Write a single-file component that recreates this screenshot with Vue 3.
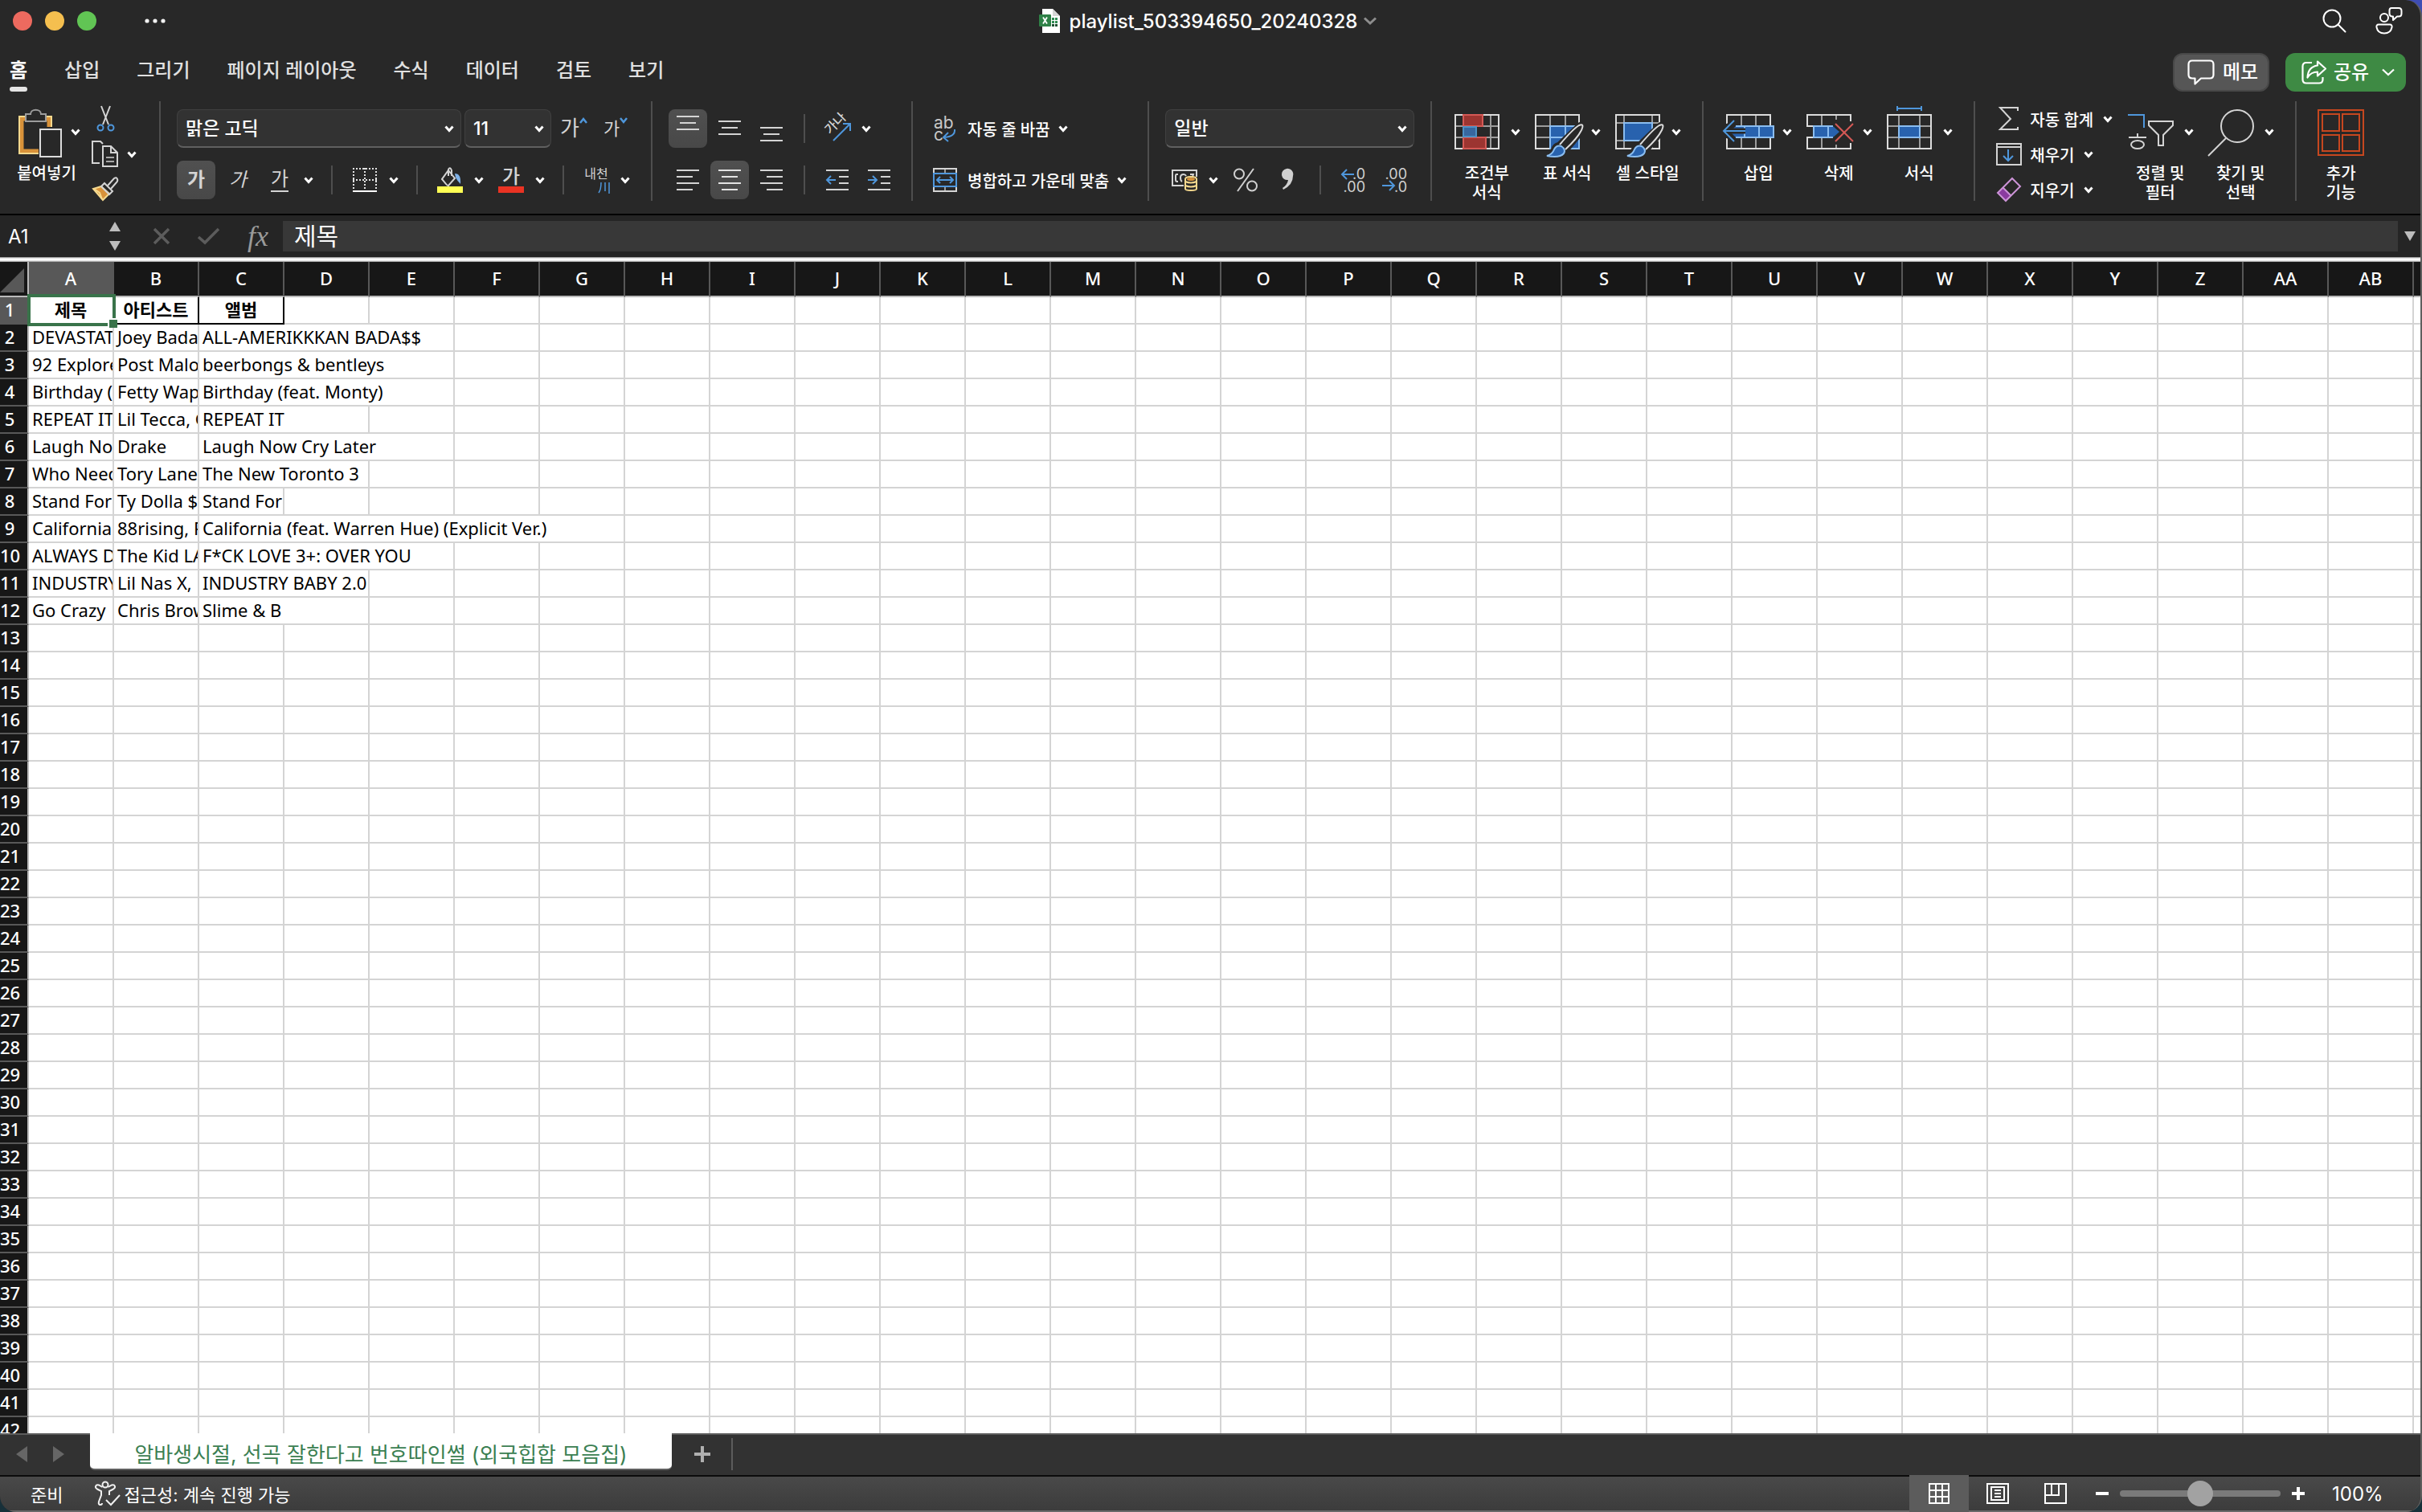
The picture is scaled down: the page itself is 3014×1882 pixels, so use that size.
<script setup>
import { h, ref } from 'vue'

const shapes = {
  chevron: [12, 8, '<path d="M1.5 1.5 6 6.5 10.5 1.5" stroke="#fff" stroke-width="3"/>'],
  thinChevron: [16, 10, '<path d="M1 1.5 8 8 15 1.5" stroke="#fff" stroke-width="2.2"/>'],
  titleChevron: [16, 10, '<path d="M1 1.5 8 8 15 1.5" stroke="#8d8d8d" stroke-width="3"/>'],
  dots: [24, 6, '<g fill="#f2f2f2" stroke="none"><circle cx="3" cy="3" r="2.6"/><circle cx="13" cy="3" r="2.6"/><circle cx="23" cy="3" r="2.6"/></g>'],
  workbook: [26, 30, '<path d="M4 0H17L26 9V30H4Z" fill="#fff" stroke="none"/><path d="M17 0V9H26Z" fill="#d5d5d5" stroke="none"/><g fill="#2f8a52" stroke="none"><path d="M16 11h3v3h-3zM20 11h3v3h-3zM16 15h3v3h-3zM20 15h3v3h-3z"/><path d="M16 19h3v3h-3zM20 19h3v3h-3z" fill="#1d4f31"/></g><rect x="0" y="7" width="15" height="15" rx="1" fill="#2f8147" stroke="none"/><path d="M5 10.5 10 18.5M10 10.5 5 18.5" stroke="#fff" stroke-width="1.8"/>'],
  search: [30, 30, '<circle cx="12" cy="12" r="10.5" stroke="#fff"/><path d="M19.500 19.500 28.500 28.500" stroke="#fff" stroke-linecap="round"/>'],
  person: [34, 34, '<g stroke="#fff"><circle cx="11" cy="13" r="5"/><path d="M4 21.500H18C20 21.500 21 23 20.500 25C19.500 30 16 32.500 11 32.500S2.500 30 1.500 25C1 23 2 21.500 4 21.500Z"/><path d="M20 1H29Q32.500 1 32.500 4.500V8Q32.500 11.500 29 11.500H27L22 16V11.500H20.500Q17.500 11 17.500 8V4Q17.500 1 20 1Z" stroke-linejoin="round"/></g>'],
  memo: [34, 32, '<path d="M6 1.500H28Q32.500 1.500 32.500 6V19Q32.500 23.500 28 23.500H17L9.500 30.500V23.500H6Q1.500 23.500 1.500 19V6Q1.500 1.500 6 1.500Z" stroke="#fff" stroke-width="2.200" stroke-linejoin="round"/>'],
  share: [32, 30, '<g stroke="#fff" stroke-width="2.200" stroke-linejoin="round"><path d="M13 3H6Q1.500 3 1.500 7.500V24Q1.500 28.500 6 28.500H22Q26.500 28.500 26.500 24V21"/><path d="M20 1.500 30 10.500 20 19.500V14.500C14 14.500 10.500 16.500 7.500 21.500C8 12 12.500 7.500 20 6.500Z"/></g>'],
  paste: [56, 60, '<path d="M11 12H5V52H26M34 12H39V22" stroke="#d8923a" stroke-width="5"/><path d="M10 9H2V55H26M34 9H42V22" stroke="#f5d98e"/><path d="M10 6H16C16-1 29-1 29 6H35V15H10Z" fill="#282828" stroke="#9c9c9c"/><rect x="28" y="25" width="26" height="34" fill="#282828" stroke="#dcdcdc"/>'],
  cut: [34, 32, '<path d="M12 0 21 23M23 0 14 23" stroke="#d4d4d4"/><g stroke="#4f97dc"><circle cx="11" cy="27" r="3.500"/><circle cx="24" cy="27" r="3.500"/></g>'],
  copy: [34, 34, '<g stroke="#d4d4d4"><path d="M14 4 11 1H1V28H10"/><path d="M14 7H24L32 15V32H14Z"/><path d="M24 7V15H32"/><path d="M18 21H28M18 26H28" stroke="#a8a8a8"/></g>'],
  brush: [34, 32, '<path d="M12 12 2 15 14 29 22 21Z" fill="#d8923a" stroke="#f5d98e"/><path d="M3 15 10 20 13 28" stroke="#f5d98e"/><path d="M12 12 16 8 26 18 22 22Z" stroke="#d4d4d4"/><path d="M20 11 28 2Q31 0 32 3 33 5 31 7L24 15" stroke="#d4d4d4"/>'],
  underline: [22, 2, '<path d="M0 1H22" stroke="#d4d4d4"/>'],
  caretUp: [10, 8, '<path d="M1 7 5 2 9 7" stroke="#4f97dc" stroke-width="2.500"/>'],
  caretDown: [10, 8, '<path d="M1 1 5 6 9 1" stroke="#4f97dc" stroke-width="2.500"/>'],
  borders: [30, 30, '<path d="M0 1H30M0 15H30M1 0V27M15 0V27M29 0V27" stroke="#e2e2e2" stroke-dasharray="2 2"/><path d="M0 29H30" stroke="#fff"/>'],
  fill: [32, 32, '<path d="M14 4 22 14 14 23Q13 23.500 11 21L6 15Z" stroke="#d4d4d4"/><path d="M14 11V3Q16-1 18 4V11" stroke="#d4d4d4"/><path d="M22 8Q30 8 29 21Q25 17 23 13Z" fill="#7fb2e8" stroke="none"/><rect y="24" width="32" height="8" fill="#ffff54" stroke="none"/>'],
  river: [14, 14, '<path d="M3 0Q3 9 0 13M8 0V11M13 0V14" stroke="#4f97dc" stroke-width="1.500"/>'],
  top: [28, 32, '<path d="M0 1H28M4 9H24M0 17H28" stroke="#d4d4d4"/>'],
  middle: [28, 32, '<path d="M0 7H28M4 15H24M0 23H28" stroke="#d4d4d4"/>'],
  bottom: [28, 32, '<path d="M0 15H28M4 23H24M0 31H28" stroke="#d4d4d4"/>'],
  left: [28, 26, '<path d="M0 1H28M0 9H20M0 17H28M0 25H20" stroke="#d4d4d4"/>'],
  center: [28, 26, '<path d="M0 1H28M4 9H24M0 17H28M4 25H24" stroke="#e2e2e2"/>'],
  right: [28, 26, '<path d="M0 1H28M8 9H28M0 17H28M8 25H28" stroke="#d4d4d4"/>'],
  outdent: [28, 26, '<path d="M0 1H28M16 9H28M16 17H28M0 25H28" stroke="#d4d4d4"/><path d="M12 13H1M6 8 1 13 6 18" stroke="#4f97dc"/>'],
  indent: [28, 26, '<path d="M0 1H28M16 9H28M16 17H28M0 25H28" stroke="#d4d4d4"/><path d="M0 13H11M6 8 11 13 6 18" stroke="#4f97dc"/>'],
  orient: [34, 32, '<text x="0" y="0" transform="translate(8 24) rotate(-45)" font-size="16" fill="#d4d4d4" stroke="none">가나</text><path d="M12 31 32 11M24 10H33V19" stroke="#4f97dc"/>'],
  wrap: [30, 34, '<g fill="#c8c8c8" stroke="none" font-size="21" font-weight="400"><text x="1" y="17">ab</text><text x="1" y="32">c</text></g><path d="M27 18Q28 27 14 28M19 22 13 28 19 33" stroke="#4f97dc"/>'],
  merge: [30, 30, '<path d="M15 1V6M15 24V29" stroke="#9c9c9c"/><path d="M1 7V1H29V7M1 23V29H29V23" stroke="#d4d4d4"/><rect x="1" y="7" width="28" height="16" stroke="#4f97dc"/><path d="M5 15H25M9 11 5 15 9 19M21 11 25 15 21 19" stroke="#4f97dc"/>'],
  currency: [32, 28, '<g stroke="#d4d4d4"><path d="M15 21H1V2H31V10"/><path d="M8 7H6Q5 7 5 9V14Q5 16 7 16H8M13 16Q11 15 11 11T15 7Q17 7 18 9M26 10 27 7 23 7" /></g><path d="M17 13Q17 10 24 10T31 13V25Q31 27 24 27T17 25ZM17 16Q24 19 31 16M17 21Q24 24 31 21" fill="#282828" stroke="#f5d98e"/><ellipse cx="24" cy="13" rx="4" ry="1" stroke="#d8923a"/>'],
  percent: [30, 30, '<g stroke="#d0d0d0"><circle cx="7" cy="7.500" r="6"/><circle cx="23" cy="22.500" r="6"/><path d="M25 1 5 29"/></g>'],
  comma: [16, 28, '<path d="M7 0A7 7 0 0 1 15 9Q15 20 3 26L2 24Q8 20 9 14A7 7 0 1 1 7 0Z" fill="#d0d0d0" stroke="none"/>'],
  moreDecimals: [32, 32, '<g fill="#d0d0d0" stroke="none" font-size="18" font-weight="400" text-anchor="end"><text x="31" y="15">.0</text><text x="31" y="31">.00</text></g><path d="M17 9H2M8 3 2 9 8 15" stroke="#4f97dc"/>'],
  fewerDecimals: [32, 32, '<g fill="#d0d0d0" stroke="none" font-size="18" font-weight="400" text-anchor="end"><text x="31" y="15">.00</text><text x="31" y="31">.0</text></g><path d="M0 23H15M9 17 15 23 9 29" stroke="#4f97dc"/>'],
  conditional: [56, 60, '<path d="M11 7V49M45 7V49M1 21H55M1 35H55" stroke="#9c9c9c"/><rect x="1" y="7" width="54" height="42" stroke="#dcdcdc"/><rect x="29" y="22" width="13" height="12" fill="#282828" stroke="none"/><g fill="#9c3531" stroke="#d45955"><rect x="11" y="7" width="24" height="14"/><rect x="11" y="35" width="28" height="14"/></g><rect x="11" y="22" width="16" height="12" fill="#37679f" stroke="#4d90c4"/>'],
  tableStyle: [56, 60, '<path d="M19 7V49M38 7V49M1 21H55M1 35H55" stroke="#9c9c9c"/><rect x="1" y="7" width="54" height="42" stroke="#dcdcdc"/><rect x="19" y="21" width="36" height="28" fill="#2862ae" stroke="#8abdf0"/><path d="M19 35H55M38 21V49" stroke="#8abdf0"/><path d="M30 45 54 22Q60 17 60 21 60 27 37 52Q32 61 14 59 22 56 24 50 26 45 30 45Z" fill="#282828" stroke="#282828" stroke-width="8"/><path d="M31 44Q48 24 55 20 62 17 58 26 53 36 38 50" stroke="#dcdcdc"/><path d="M15 58Q22 56 24 50 27 44 33 46 39 50 36 55 31 61 15 58Z" fill="#2862ae" stroke="#8abdf0"/>'],
  cellStyle: [56, 60, '<path d="M11 7V49M46 7V49M1 17H55M1 39H55" stroke="#9c9c9c"/><rect x="1" y="7" width="54" height="42" stroke="#dcdcdc"/><rect x="11" y="17" width="35" height="22" fill="#2862ae" stroke="#8abdf0"/><path d="M30 45 54 22Q60 17 60 21 60 27 37 52Q32 61 14 59 22 56 24 50 26 45 30 45Z" fill="#282828" stroke="#282828" stroke-width="8"/><path d="M31 44Q48 24 55 20 62 17 58 26 53 36 38 50" stroke="#dcdcdc"/><path d="M15 58Q22 56 24 50 27 44 33 46 39 50 36 55 31 61 15 58Z" fill="#2862ae" stroke="#8abdf0"/>'],
  insert: [56, 60, '<path d="M19 7V20M37 7V20M19 36V49M37 36V49" stroke="#9c9c9c"/><path d="M1 18V7H55V20M1 36V49H55V36" stroke="#dcdcdc"/><path d="M12 21H59V35H12L5 28Z" fill="#2862ae" stroke="none"/><path d="M12 21H59V35H12M41 21V35M23 21V35" stroke="#8abdf0"/><path d="M24 27H-2M10 14-3 27 10 40" stroke="#282828" stroke-width="7"/><path d="M24 27H-2M10 14-3 27 10 40" stroke="#4f97dc"/>'],
  remove: [56, 60, '<path d="M19 7V20M37 7V13M19 36V49M37 44V49" stroke="#9c9c9c"/><path d="M9 21H1V7H55V15M9 35H1V49H55V42" stroke="#dcdcdc"/><path d="M9 21H33L41 28 33 35H9Z" fill="#2862ae" stroke="none"/><path d="M33 21H9V35H33M27 21V35" stroke="#8abdf0"/><path d="M36 18 58 40M58 18 36 40" stroke="#282828" stroke-width="6"/><path d="M36 18 58 40M58 18 36 40" stroke="#d45955"/>'],
  format: [56, 60, '<path d="M15 7V49M41 7V49M1 21H55M1 35H55" stroke="#9c9c9c"/><rect x="1" y="7" width="54" height="42" stroke="#dcdcdc"/><rect x="15" y="21" width="26" height="14" fill="#2862ae" stroke="#8abdf0"/><path d="M13-1H43M13-4V2M43-4V2" stroke="#4f97dc"/>'],
  sigma: [28, 30, '<path d="M25 5V1H3L16 15 3 28H25V25" stroke="#d4d4d4"/>'],
  fillDown: [32, 28, '<path d="M1 1H31V27H1ZM1 5H31" stroke="#d4d4d4"/><path d="M15 8V22M9 16 15 22 21 16" stroke="#4f97dc"/>'],
  eraser: [32, 32, '<path d="M8 13 18 23 12 30 2 20Z" fill="#8a3ba0" stroke="none"/><path d="M20 2 30 12 12 30 2 20ZM8 13 18 23" stroke="#cd94d8"/>'],
  sort: [56, 60, '<path d="M0 7H20V23" stroke="#4f97dc"/><path d="M1 35H23M12 30V35" stroke="#d4d4d4"/><ellipse cx="12" cy="44" rx="8" ry="5" stroke="#d4d4d4"/><path d="M26 15H56V20L44 32V45H38V32L26 20Z" stroke="#d4d4d4"/>'],
  find: [56, 60, '<circle cx="36" cy="21" r="20" stroke="#d4d4d4"/><path d="M22 36 0 58" stroke="#d4d4d4"/>'],
  addins: [58, 60, '<g stroke="#c6471f"><rect x="1" y="1" width="56" height="56"/><rect x="6" y="6" width="21" height="21"/><rect x="31" y="6" width="21" height="21"/><rect x="6" y="32" width="21" height="20"/><rect x="31" y="32" width="21" height="20"/></g>'],
  spinUp: [14, 12, '<path d="M7 0 14 12H0Z" fill="#bdbdbd" stroke="none"/>'],
  spinDown: [14, 12, '<path d="M7 12 14 0H0Z" fill="#bdbdbd" stroke="none"/>'],
  cancel: [22, 22, '<path d="M2 2 20 20M20 2 2 20" stroke="#5c5c5c" stroke-width="3.500"/>'],
  enter: [30, 22, '<path d="M2 12 10 19 27 2" stroke="#5c5c5c" stroke-width="3.500"/>'],
  corner: [34, 42, '<path d="M30 8V38H0Z" fill="#585858" stroke="none"/>'],
  prevSheet: [14, 20, '<path d="M0 10 14 0V20Z" fill="#666" stroke="none"/>'],
  nextSheet: [14, 20, '<path d="M14 10 0 0V20Z" fill="#666" stroke="none"/>'],
  plus: [20, 20, '<path d="M10 0V20M0 10H20" stroke="#b0b0b0" stroke-width="4"/>'],
  access: [32, 32, '<g stroke="#f0f0f0"><circle cx="13" cy="5" r="3.500"/><path d="M9.500 8 5 5.500Q2 4.500 1 7 0.500 9 3 10.500L8 13V18L5 26Q4 30 7 30 9 30 9 28M16.500 8 21 5.500Q24 4.500 25 7 25.500 9 23 10.500L18 13V18"/><path d="M14 24 20 30 31 18"/></g>'],
  normalView: [26, 26, '<path d="M1 1H25V25H1ZM1 9H25M1 17H25M9 1V25M17 1V25" stroke="#fff"/>'],
  pageView: [28, 26, '<path d="M1 1H27V25H1ZM6 5H22V21H6ZM10 9H18M10 13H18M10 17H18" stroke="#fff"/>'],
  breakView: [28, 26, '<path d="M1 1H27V25H1ZM1 15H18V1M9 1V15" stroke="#fff"/>'],
  zoomOut: [16, 16, '<path d="M0 8H16" stroke="#fff" stroke-width="4"/>'],
  zoomIn: [16, 16, '<path d="M0 8H16M8 0V16" stroke="#fff" stroke-width="4"/>'],
}

const Icon = (props) => {
  const [width, height, markup] = shapes[props.name]
  return h('svg', {
    width, height, viewBox: `0 0 ${width} ${height}`, fill: 'none',
    'stroke-width': 2, 'aria-hidden': 'true', innerHTML: markup,
  })
}
Icon.props = ['name']

const tabs = ['홈', '삽입', '그리기', '페이지 레이아웃', '수식', '데이터', '검토', '보기']
const styleTools = [
  { icon: 'conditional', label: '조건부 서식' },
  { icon: 'tableStyle', label: '표 서식' },
  { icon: 'cellStyle', label: '셀 스타일' },
]
const cellTools = [
  { icon: 'insert', label: '삽입' },
  { icon: 'remove', label: '삭제' },
  { icon: 'format', label: '서식' },
]
const editTools = [
  { icon: 'sigma', label: '자동 합계' },
  { icon: 'fillDown', label: '채우기' },
  { icon: 'eraser', label: '지우기' },
]
const findTools = [
  { icon: 'sort', label: '정렬 및 필터' },
  { icon: 'find', label: '찾기 및 선택' },
]

const columns = Array.from({ length: 29 }, (_, i) =>
  i < 26 ? String.fromCharCode(65 + i) : 'A' + String.fromCharCode(39 + i))

// span: how many columns the album text runs across
const songs = [
  { title: 'DEVASTATED', artist: 'Joey Bada$$', album: 'ALL-AMERIKKKAN BADA$$', span: 3 },
  { title: '92 Explorer', artist: 'Post Malone', album: 'beerbongs & bentleys', span: 3 },
  { title: 'Birthday (feat.', artist: 'Fetty Wap', album: 'Birthday (feat. Monty)', span: 3 },
  { title: 'REPEAT IT', artist: 'Lil Tecca, Gunna', album: 'REPEAT IT', span: 2 },
  { title: 'Laugh Now', artist: 'Drake', album: 'Laugh Now Cry Later', span: 3 },
  { title: 'Who Needs', artist: 'Tory Lanez', album: 'The New Toronto 3', span: 2 },
  { title: 'Stand For', artist: 'Ty Dolla $ign', album: 'Stand For', span: 1 },
  { title: 'California', artist: '88rising, Rich', album: 'California (feat. Warren Hue) (Explicit Ver.)', span: 5 },
  { title: 'ALWAYS DO', artist: 'The Kid LAROI', album: 'F*CK LOVE 3+: OVER YOU', span: 3 },
  { title: 'INDUSTRY', artist: 'Lil Nas X,', album: 'INDUSTRY BABY 2.0', span: 2 },
  { title: 'Go Crazy', artist: 'Chris Brown', album: 'Slime & B', span: 2 },
]
const firstEmptyRow = songs.length + 2
const emptyRows = Array.from({ length: 42 - songs.length - 1 }, (_, i) => firstEmptyRow + i)

const formula = ref('제목')
const zoom = ref(100)
</script>

<template>
  <div class="window">
    <header class="titlebar">
      <div class="titlebar-left">
        <button class="light red" aria-label="닫기"></button>
        <button class="light yellow" aria-label="최소화"></button>
        <button class="light green" aria-label="확대"></button>
        <button class="more" aria-label="더 보기"><Icon name="dots" /></button>
      </div>
      <button class="doc-title">
        <Icon name="workbook" />
        <span>playlist_503394650_20240328</span>
        <Icon name="titleChevron" />
      </button>
      <div class="titlebar-right">
        <button aria-label="검색"><Icon name="search" /></button>
        <button aria-label="계정"><Icon name="person" /></button>
      </div>
    </header>

    <nav class="tabs">
      <a v-for="(tab, i) in tabs" :key="tab" href="#" :class="{ active: i === 0 }">{{ tab }}</a>
      <div class="tab-actions">
        <button class="pill memo"><Icon name="memo" /><span>메모</span></button>
        <button class="pill share"><Icon name="share" /><span>공유</span><Icon name="thinChevron" class="share-chev" /></button>
      </div>
    </nav>

    <div class="ribbon">
      <section class="group clipboard">
        <button class="large">
          <span class="large-top"><Icon name="paste" /><span class="chev"><Icon name="chevron" /></span></span>
          <span class="label">붙여넣기</span>
        </button>
        <div class="clip-tools">
          <button aria-label="잘라내기"><Icon name="cut" /></button>
          <button aria-label="복사"><Icon name="copy" /><span class="chev"><Icon name="chevron" /></span></button>
          <button aria-label="서식 복사"><Icon name="brush" /></button>
        </div>
      </section>

      <section class="group rows">
        <div class="row">
          <label class="combo font-name">
            <select aria-label="글꼴"><option>맑은 고딕</option></select>
            <Icon name="chevron" />
          </label>
          <label class="combo font-size">
            <select aria-label="글꼴 크기"><option>11</option></select>
            <Icon name="chevron" />
          </label>
          <button class="tool grow gap" aria-label="글꼴 크게"><span class="big">가</span><Icon name="caretUp" /></button>
          <button class="tool grow" aria-label="글꼴 작게"><span>가</span><Icon name="caretDown" /></button>
        </div>
        <div class="row">
          <button class="tool on bold gap">가</button>
          <button class="tool italic gap">가</button>
          <button class="tool under"><span>가</span><Icon name="underline" /></button>
          <button class="chev" aria-label="밑줄 옵션"><Icon name="chevron" /></button>
          <i class="sep"></i>
          <button class="tool" aria-label="테두리"><Icon name="borders" /></button>
          <button class="chev" aria-label="테두리 옵션"><Icon name="chevron" /></button>
          <i class="sep"></i>
          <button class="tool" aria-label="채우기 색"><Icon name="fill" /></button>
          <button class="chev gap" aria-label="채우기 색 옵션"><Icon name="chevron" /></button>
          <button class="tool font-color"><span>가</span><b></b></button>
          <button class="chev" aria-label="글꼴 색 옵션"><Icon name="chevron" /></button>
          <i class="sep"></i>
          <button class="tool ruby"><span>내천</span><Icon name="river" /></button>
          <button class="chev" aria-label="윗주 옵션"><Icon name="chevron" /></button>
        </div>
      </section>

      <section class="group rows align">
        <div class="row">
          <button class="tool on gap" aria-label="위쪽 맞춤"><Icon name="top" /></button>
          <button class="tool gap" aria-label="가운데 맞춤"><Icon name="middle" /></button>
          <button class="tool" aria-label="아래쪽 맞춤"><Icon name="bottom" /></button>
          <i class="sep"></i>
          <button class="tool" aria-label="방향"><Icon name="orient" /></button>
          <button class="chev" aria-label="방향 옵션"><Icon name="chevron" /></button>
        </div>
        <div class="row">
          <button class="tool gap" aria-label="왼쪽 맞춤"><Icon name="left" /></button>
          <button class="tool on gap" aria-label="가로 가운데 맞춤"><Icon name="center" /></button>
          <button class="tool" aria-label="오른쪽 맞춤"><Icon name="right" /></button>
          <i class="sep"></i>
          <button class="tool gap" aria-label="내어쓰기"><Icon name="outdent" /></button>
          <button class="tool" aria-label="들여쓰기"><Icon name="indent" /></button>
        </div>
      </section>

      <section class="group rows wrap-group">
        <button class="wide"><span class="slot"><Icon name="wrap" /></span>자동 줄 바꿈<span class="chev"><Icon name="chevron" /></span></button>
        <button class="wide"><span class="slot"><Icon name="merge" /></span>병합하고 가운데 맞춤<span class="chev"><Icon name="chevron" /></span></button>
      </section>

      <section class="group rows">
        <div class="row">
          <label class="combo number-format">
            <select aria-label="표시 형식"><option>일반</option></select>
            <Icon name="chevron" />
          </label>
        </div>
        <div class="row">
          <button class="tool" aria-label="회계 표시 형식"><Icon name="currency" /></button>
          <button class="chev gap" aria-label="통화 옵션"><Icon name="chevron" /></button>
          <button class="tool gap" aria-label="백분율"><Icon name="percent" /></button>
          <button class="tool" aria-label="쉼표 스타일"><Icon name="comma" /></button>
          <i class="sep"></i>
          <button class="tool gap" aria-label="자릿수 늘림"><Icon name="moreDecimals" /></button>
          <button class="tool" aria-label="자릿수 줄임"><Icon name="fewerDecimals" /></button>
        </div>
      </section>

      <section class="group">
        <button v-for="t in styleTools" :key="t.icon" class="large">
          <span class="large-top"><Icon :name="t.icon" /><span class="chev"><Icon name="chevron" /></span></span>
          <span class="label">{{ t.label }}</span>
        </button>
      </section>

      <section class="group">
        <button v-for="t in cellTools" :key="t.icon" class="large">
          <span class="large-top"><Icon :name="t.icon" /><span class="chev"><Icon name="chevron" /></span></span>
          <span class="label">{{ t.label }}</span>
        </button>
      </section>

      <section class="group">
        <div class="edit-tools">
          <button v-for="t in editTools" :key="t.icon">
            <span class="slot"><Icon :name="t.icon" /></span>{{ t.label }}<span class="chev"><Icon name="chevron" /></span>
          </button>
        </div>
        <button v-for="t in findTools" :key="t.icon" class="large">
          <span class="large-top"><Icon :name="t.icon" /><span class="chev"><Icon name="chevron" /></span></span>
          <span class="label">{{ t.label }}</span>
        </button>
      </section>

      <section class="group last">
        <button class="large addins">
          <span class="large-top"><Icon name="addins" /></span>
          <span class="label">추가 기능</span>
        </button>
      </section>
    </div>

    <div class="formula-bar">
      <label class="name-box">
        <input value="A1" aria-label="이름 상자">
        <span class="spin"><Icon name="spinUp" /><Icon name="spinDown" /></span>
      </label>
      <button aria-label="취소"><Icon name="cancel" /></button>
      <button aria-label="입력"><Icon name="enter" /></button>
      <button class="fx">fx</button>
      <input v-model="formula" class="formula" aria-label="수식 입력줄">
      <button class="expand" aria-label="수식 입력줄 확장"><Icon name="spinDown" /></button>
    </div>

    <main class="sheet">
      <table>
        <colgroup>
          <col class="col-num">
          <col v-for="c in columns" :key="c" class="col-cell">
        </colgroup>
        <thead>
          <tr>
            <th class="select-all"><Icon name="corner" /></th>
            <th v-for="(c, i) in columns" :key="c" scope="col" :class="{ current: i === 0 }">{{ c }}</th>
          </tr>
        </thead>
        <tbody>
          <tr>
            <th scope="row" class="current"><span>1</span></th>
            <td class="head selected">제목<i class="cursor"></i><i class="handle"></i></td>
            <td class="head boxed">아티스트</td>
            <td class="head boxed">앨범</td>
            <td v-for="n in columns.length - 3" :key="n"></td>
          </tr>
          <tr v-for="(s, i) in songs" :key="s.album">
            <th scope="row"><span>{{ i + 2 }}</span></th>
            <td>{{ s.title }}</td>
            <td>{{ s.artist }}</td>
            <td :colspan="s.span">{{ s.album }}</td>
            <td v-for="n in columns.length - 2 - s.span" :key="n"></td>
          </tr>
          <tr v-for="r in emptyRows" :key="r">
            <th scope="row"><span>{{ r }}</span></th>
            <td v-for="c in columns" :key="c"></td>
          </tr>
        </tbody>
      </table>
    </main>

    <div class="sheet-bar">
      <button class="nav" aria-label="이전 시트"><Icon name="prevSheet" /></button>
      <button class="nav" aria-label="다음 시트"><Icon name="nextSheet" /></button>
      <button class="sheet-tab">알바생시절, 선곡 잘한다고 번호따인썰 (외국힙합 모음집)</button>
      <button class="add-sheet" aria-label="새 시트"><Icon name="plus" /></button>
    </div>

    <footer class="status">
      <span class="ready">준비</span>
      <button class="access"><Icon name="access" />접근성: 계속 진행 가능</button>
      <div class="views">
        <button class="view on" aria-label="기본"><Icon name="normalView" /></button>
        <button class="view" aria-label="페이지 레이아웃 보기"><Icon name="pageView" /></button>
        <button class="view" aria-label="페이지 나누기 미리 보기"><Icon name="breakView" /></button>
      </div>
      <button aria-label="축소"><Icon name="zoomOut" /></button>
      <input v-model="zoom" class="zoom" type="range" min="0" max="200" aria-label="확대/축소">
      <button aria-label="확대"><Icon name="zoomIn" /></button>
      <span class="percent">{{ zoom }}%</span>
    </footer>
  </div>
</template>

<style>
html,
body {
  background: linear-gradient(#3f4db4, #173039);
}
</style>

<style scoped>
.window {
  display: flex;
  flex-direction: column;
  box-sizing: border-box;
  width: 100%;
  height: 100vh;
  overflow: hidden;
  border-right: 2px solid #5e5e5e;
  border-radius: 0 20px 20px 20px;
  background: #282828;
  color: #fff;
  font-family: Inter, "Noto Sans CJK KR", sans-serif;
  font-size: 20px;
  font-weight: 500;
}
button,
input,
select {
  margin: 0;
  padding: 0;
  border: 0;
  background: none;
  color: inherit;
  font: inherit;
}
button {
  display: flex;
  align-items: center;
  flex: none;
}
svg {
  flex: none;
  display: block;
  overflow: visible;
}

.titlebar {
  display: grid;
  grid-template-columns: 1fr auto 1fr;
  align-items: center;
  flex: none;
  height: 52px;
}
.titlebar-left {
  display: flex;
  align-items: center;
  gap: 16px;
  padding-left: 16px;
}
.light {
  width: 24px;
  height: 24px;
  border-radius: 50%;
}
.red { background: #ed6a5f; }
.yellow { background: #f5bf4f; }
.green { background: #61c554; }
.more { padding-left: 44px; }
.doc-title {
  gap: 12px;
  padding-right: 6px;
  font-size: 24px;
}
.doc-title svg:last-child { margin-left: -4px; }
.titlebar-right {
  display: flex;
  justify-content: flex-end;
  align-items: center;
  gap: 36px;
  padding-right: 22px;
}

.tabs {
  display: flex;
  flex: none;
  height: 66px;
  padding-left: 12px;
}
.tabs a {
  display: flex;
  flex-direction: column;
  justify-content: space-between;
  margin-right: 45px;
  padding: 18px 1px 4px 0;
  color: #e0e0e0;
  font-size: 24px;
  line-height: 36px;
  text-decoration: none;
}
.tabs a.active {
  color: #fff;
  font-weight: 700;
}
.tabs a.active::after {
  content: "";
  height: 6px;
  border-radius: 3px;
  background: #e4e4e4;
}
.tab-actions {
  display: flex;
  gap: 20px;
  margin-left: auto;
  padding: 14px 18px 4px 0;
}
.pill {
  box-sizing: border-box;
  height: 48px;
  border-radius: 12px;
  font-size: 24px;
}
.pill span { line-height: 32px; }
.memo {
  gap: 10px;
  width: 120px;
  padding-left: 16px;
  border: 2px solid #484848;
  background: #565656;
}
.share {
  gap: 8px;
  width: 150px;
  padding-left: 20px;
  background: #3e8a44;
}
.share-chev { margin-left: 8px; }

.ribbon {
  display: flex;
  flex: none;
  height: 124px;
  padding: 8px 0 16px;
  border-bottom: 2px solid #000;
}
.group {
  display: flex;
  gap: 4px;
  flex: none;
  box-sizing: border-box;
  padding: 10px 20px 0;
  border-right: 2px solid #4e4e4e;
}
.group.last { border: 0; }
.rows {
  flex-direction: column;
  gap: 16px;
}
.align { padding-right: 16px; }
.row {
  display: flex;
  align-items: center;
  height: 48px;
}
.tool {
  justify-content: center;
  width: 48px;
  height: 48px;
  border-radius: 8px;
  color: #d4d4d4;
  font-size: 24px;
  line-height: 28px;
}
.gap { margin-right: 4px; }
.on { background: linear-gradient(#505050, #484848); }
.chev {
  display: flex;
  align-items: center;
  justify-content: center;
  flex: none;
  width: 24px;
  height: 24px;
}
.sep {
  width: 2px;
  height: 36px;
  margin: 0 16px;
  background: #4e4e4e;
}
.combo {
  position: relative;
  display: flex;
  align-items: center;
  margin-right: 4px;
}
.combo select {
  appearance: none;
  box-sizing: border-box;
  width: 100%;
  height: 48px;
  padding: 0 10px;
  border: 1px solid #404040;
  border-bottom: 2px solid #606060;
  border-radius: 8px;
  background: #323232;
  font-size: 23px;
}
.combo svg {
  position: absolute;
  right: 9px;
  pointer-events: none;
}
.font-name { width: 354px; }
.font-size { width: 108px; }
.number-format { width: 310px; margin-right: 0; }
.grow {
  align-items: flex-start;
  box-sizing: border-box;
  padding-top: 10px;
  font-size: 22px;
  font-weight: 400;
}
.grow .big { font-size: 26px; }
.bold { font-weight: 700; }
.italic {
  font-style: italic;
  font-weight: 400;
}
.under {
  flex-direction: column;
  font-weight: 400;
}
.font-color {
  flex-direction: column;
  line-height: 24px;
}
.font-color b {
  width: 32px;
  height: 8px;
  background: #ea3323;
}
.ruby {
  flex-direction: column;
  gap: 2px;
  font-size: 16px;
  font-weight: 400;
  line-height: 18px;
}
.ruby svg { margin-left: 20px; }
.clipboard {
  gap: 12px;
  width: 200px;
  padding-left: 14px;
  padding-right: 0;
}
.large {
  flex-direction: column;
  width: 96px;
}
.clipboard .large { width: 88px; }
.large-top {
  display: flex;
  gap: 8px;
  width: 88px;
  height: 60px;
}
.clipboard .large-top { width: 80px; gap: 4px; }
.large-top .chev { height: 56px; }
.label {
  width: 80px;
  margin-top: 8px;
  line-height: 24px;
  word-break: keep-all;
}
.large:not(.addins) .large-top { align-self: flex-end; }
.clip-tools {
  display: flex;
  flex-direction: column;
  justify-content: space-between;
  gap: 10px;
  height: 120px;
  margin-top: -4px;
}
.clip-tools .chev { margin-left: 4px; }
.wrap-group { padding-left: 16px; }
.wide { height: 48px; }
.slot {
  display: flex;
  justify-content: center;
  width: 48px;
  margin-right: 4px;
}
.wide .chev { margin-left: 4px; }
.edit-tools .chev { margin-left: 6px; }
.edit-tools {
  display: flex;
  flex-direction: column;
  width: 158px;
  margin-top: -10px;
}
.edit-tools .slot { width: 44px; margin-right: 4px; }
.edit-tools button { height: 44px; }
.addins { width: 70px; }
.addins .large-top { width: 58px; }
.addins .label { width: 60px; }

.formula-bar {
  display: flex;
  align-items: center;
  flex: none;
  box-sizing: border-box;
  height: 58px;
  padding-bottom: 6px;
  background: linear-gradient(#252525 52px, #8a8a8a 52px, #fff 54px, #fff 56px, #8a8a8a 58px);
}
.name-box {
  display: flex;
  align-items: center;
  justify-content: space-between;
  width: 150px;
  margin-right: 40px;
}
.name-box input {
  width: 110px;
  padding-left: 10px;
  font-size: 24px;
  font-weight: 400;
}
.spin {
  display: flex;
  flex-direction: column;
  gap: 12px;
}
.formula-bar > button { margin-right: 33px; }
.formula-bar > .fx {
  width: 42px;
  margin-right: 2px;
  color: #9a9a9a;
  font-family: "Liberation Serif", serif;
  font-size: 36px;
  font-style: italic;
  line-height: 36px;
}
.formula {
  flex: 1;
  height: 38px;
  padding: 0 14px 4px;
  box-sizing: border-box;
  background: #383838;
  font-size: 30px;
  font-weight: 400;
}
.formula-bar > .expand { margin: 0 6px 0 8px; }

.sheet {
  flex: 1;
  min-height: 0;
  overflow: hidden;
  background: #fff;
  color: #000;
  font-family: "Noto Sans", "Noto Sans CJK KR", sans-serif;
  font-size: 22px;
  font-weight: 400;
  line-height: 30px;
}
table {
  width: 3110px;
  table-layout: fixed;
  border-collapse: separate;
  border-spacing: 0;
}
.col-num { width: 36px; }
.col-cell { width: 106px; }
th,
td {
  box-sizing: border-box;
  height: 34px;
  padding: 0;
  overflow: hidden;
  vertical-align: top;
  white-space: nowrap;
}
td {
  padding-left: 4px;
  border-right: 2px solid #d4d4d4;
  border-bottom: 2px solid #d4d4d4;
}
th {
  border-right: 2px solid #585858;
  border-bottom: 2px solid #585858;
  background: #171717;
  color: #fff;
  font-weight: 500;
}
thead th {
  height: 44px;
  border-bottom-color: #bababa;
  line-height: 40px;
}
thead th.select-all,
tbody th { border-right-color: #bababa; }
tbody th span {
  display: block;
  width: 24px;
}
th.current { background: #585858; }
td.head {
  padding: 0;
  font-weight: 700;
  text-align: center;
}
td.boxed { border-color: #000; }
td.selected {
  position: relative;
  overflow: visible;
}
.cursor {
  position: absolute;
  inset: -4px -4px -4px -2px;
  border: 4px solid #39734a;
}
.handle {
  position: absolute;
  right: -6px;
  bottom: -6px;
  width: 10px;
  height: 10px;
  border: 2px solid #fff;
  border-width: 2px 0 0 2px;
  background: #39734a;
}

.sheet-bar {
  display: flex;
  align-items: center;
  flex: none;
  box-sizing: border-box;
  height: 52px;
  padding-left: 20px;
  background: linear-gradient(#5c5c5c 2px, #323232 2px);
}
.nav { margin-right: 32px; }
.sheet-tab {
  align-self: flex-start;
  justify-content: center;
  box-sizing: border-box;
  width: 724px;
  height: 46px;
  padding-top: 4px;
  border-bottom: 2px solid #606060;
  border-radius: 0 0 6px 6px;
  background: #fff;
  color: #3b8052;
  font-size: 26px;
  font-weight: 400;
}
.add-sheet {
  height: 40px;
  padding: 0 26px 0 28px;
  border-right: 2px solid #5c5c5c;
}

.status {
  display: flex;
  align-items: center;
  flex: none;
  box-sizing: border-box;
  height: 46px;
  padding-right: 46px;
  border-top: 2px solid #0c0c0c;
  border-bottom: 2px solid #6a6a6a;
  background: linear-gradient(#494949, #3c3c3c);
  font-size: 22px;
  font-weight: 400;
}
.ready { margin: 0 40px 0 38px; }
.access { gap: 4px; }
.views {
  display: flex;
  margin: 0 14px 0 auto;
}
.view {
  justify-content: center;
  width: 72px;
  height: 46px;
}
.view.on {
  width: 74px;
  background: #5c5c5c;
}
.zoom {
  appearance: none;
  width: 200px;
  height: 8px;
  margin: 0 14px;
  border-radius: 4px;
  background: #7a7a7a;
}
.zoom::-webkit-slider-thumb {
  appearance: none;
  width: 32px;
  height: 32px;
  border-radius: 50%;
  background: #a2a2a2;
}
.percent {
  width: 64px;
  margin-left: 34px;
  font-size: 24px;
}
</style>
